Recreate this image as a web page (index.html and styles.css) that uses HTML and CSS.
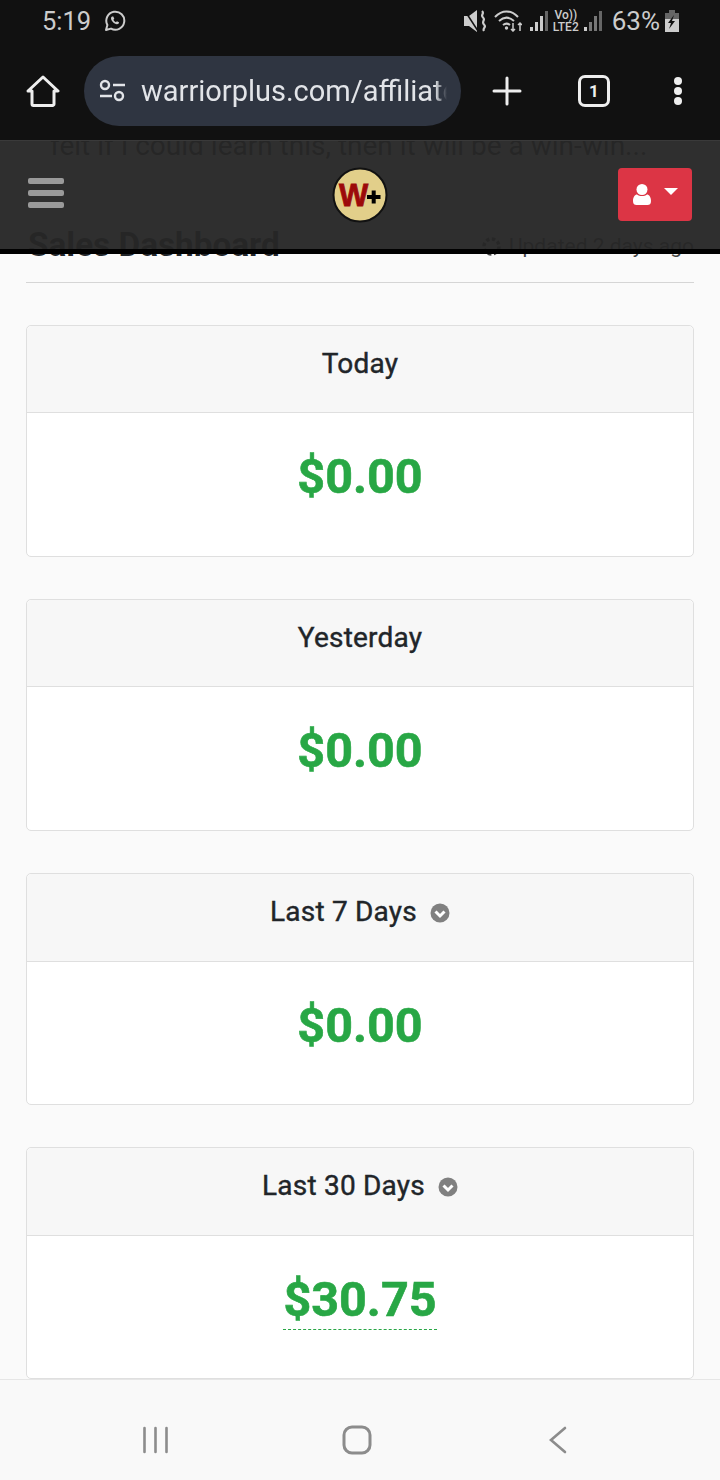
FILE: index.html
```html
<!DOCTYPE html>
<html lang="en">
<head>
<meta charset="utf-8">
<title>Sales Dashboard</title>
<link rel="stylesheet" href="styles.css">
</head>

<body>

<div id="phone">

	<div id="chrome">
		<div class="status-bar">
			<div class="status-left">
				<span class="clock">5:19</span>
				<svg class="wa-icon" width="22" height="22" viewBox="0 0 22 22"><path d="M2 20l1.400-5A9 9 0 1 1 7 18.600z" fill="none" stroke="#ccc" stroke-width="2" stroke-linejoin="round"/><path d="M8 6.500c-1.200.6-1.300 2.300-.3 4 1 1.800 3 3.500 5 3.800 1.300.2 2.400-.8 2.300-2l-2.100-1-1 1c-1-.4-2-1.400-2.500-2.500l.9-1-1-2.300z" fill="#ccc"/></svg>
			</div>
			<div class="status-right">
				<svg class="st-mute" width="22" height="22" viewBox="0 0 22 22"><path d="M0 6h5l8-6v22l-8-6H0z" fill="#ccc"/><path d="M1 1l13 20" stroke="#111" stroke-width="1.500"/><path d="M18 1c3 2.500-2 4 1 6.500s-2 4 1 7-2 3.500 0 6.500" fill="none" stroke="#ccc" stroke-width="2.200"/></svg>
				<svg class="st-wifi" width="28" height="22" viewBox="0 0 28 22"><g fill="none" stroke="#ccc" stroke-width="2"><path d="M1 7c7-7.500 16-7.500 23 0"/><path d="M5 11c5-4.500 10-4.500 15 0"/><path d="M9 15c2.500-2 4.500-2 7 0"/></g><circle cx="12.500" cy="18" r="1.700" fill="#ccc"/><path d="M19 13v8M17 19l2 2 2-2M26 21v-8M24 15l2-2 2 2" fill="none" stroke="#ccc" stroke-width="1.500"/></svg>
				<div class="signal">
					<i class="b1"></i><i class="b2"></i><i class="b3"></i><i class="b4"></i>
				</div>
				<div class="volte"><span>Vo))</span><span>LTE2</span></div>
				<div class="signal dim">
					<i class="b1"></i><i class="b2"></i><i class="b3"></i><i class="b4"></i>
				</div>
				<span class="battery-pct">63%</span>
				<svg width="14" height="22" viewBox="0 0 14 22"><path d="M4 0h6v3h4v19H0V3h4z" fill="#666"/><path d="M0 9h14v13H0z" fill="#ccc"/><path d="M9 5L3 13h3l-2 6 6-8H7z" fill="#111"/></svg>
			</div>
		</div>
		<div class="toolbar">
			<svg class="tool-home" width="34" height="34" viewBox="0 0 34 34"><path d="M2 17L17 3l15 14h-4v13a1.500 1.500 0 0 1-1.500 1.500h-19A1.500 1.500 0 0 1 6 30V17z" fill="none" stroke="#eee" stroke-width="3" stroke-linejoin="round"/></svg>
			<div class="url-pill">
				<svg class="url-tune" width="28" height="24" viewBox="0 0 28 24"><g fill="none" stroke="#e2e4e8" stroke-width="2.400"><circle cx="6" cy="6" r="4"/><circle cx="20" cy="17" r="4"/><path d="M14 6h12M1 17h12"/></g></svg>
				<span class="url-text">warriorplus.com/affiliate</span>
			</div>
			<svg class="tool-plus" width="30" height="30" viewBox="0 0 30 30"><path d="M15 2v26M2 15h26" stroke="#eee" stroke-width="3" stroke-linecap="round"/></svg>
			<div class="tab-count">1</div>
			<div class="tool-menu"><i></i><i></i><i></i></div>
		</div>
	</div>

	<div id="page">
		<nav class="navbar">
			<div class="burger"><i></i><i></i><i></i></div>
			<svg class="logo" width="56" height="56" viewBox="0 0 56 56"><circle cx="28" cy="28" r="26.500" fill="#e2cf8a" stroke="#111" stroke-width="2"/><text x="7" y="39" class="logo-w">W</text><path d="M35 30h13.500M41.700 23.500v13" stroke="#000" stroke-width="4"/></svg>
			<div class="user-btn">
				<svg width="18" height="22" viewBox="0 0 18 22"><circle cx="9" cy="5.500" r="5.500" fill="#fff"/><path d="M0 17c0-4 2-6.500 4-6.500 1.500 1 3 1.500 5 1.500s3.500-.5 5-1.500c2 0 4 2.500 4 6.500 0 3-1.500 4-3.500 4h-11C1.500 21 0 20 0 17z" fill="#fff"/></svg>
				<span class="caret"></span>
			</div>
		</nav>

		<p class="ghost-line">felt if I could learn this, then it will be a win-win...</p>

		<div class="page-head">
			<h1>Sales Dashboard</h1>
			<div class="updated">
				<svg width="19" height="19" viewBox="0 0 19 19"><circle cx="9.500" cy="9.500" r="7.500" fill="none" stroke="#444" stroke-width="3.500" stroke-dasharray="3.500 2.400"/></svg>
				<span>Updated 2 days ago</span>
			</div>
		</div>

		<div class="card">
			<div class="card-header">Today</div>
			<div class="card-body"><span class="amount">$0.00</span></div>
		</div>
		<div class="card">
			<div class="card-header">Yesterday</div>
			<div class="card-body"><span class="amount">$0.00</span></div>
		</div>
		<div class="card card-tall">
			<div class="card-header">Last 7 Days
				<svg class="chev" width="20" height="20" viewBox="0 0 20 20"><circle cx="10" cy="10" r="9.500" fill="#808080"/><path d="M5.500 8.500L10 13l4.500-4.500" fill="none" stroke="#fff" stroke-width="3"/></svg>
			</div>
			<div class="card-body"><span class="amount">$0.00</span></div>
		</div>
		<div class="card card-tall">
			<div class="card-header">Last 30 Days
				<svg class="chev" width="20" height="20" viewBox="0 0 20 20"><circle cx="10" cy="10" r="9.500" fill="#808080"/><path d="M5.500 8.500L10 13l4.500-4.500" fill="none" stroke="#fff" stroke-width="3"/></svg>
			</div>
			<div class="card-body"><span class="amount dotted">$30.75</span></div>
		</div>
	</div>

	<div id="softkeys">
		<svg width="28" height="28" viewBox="0 0 28 28"><path d="M3.500 2v24M14.500 2v24M25.500 2v24" stroke="#8c8c8c" stroke-width="2.600" stroke-linecap="round"/></svg>
		<svg class="key-home" width="30" height="30" viewBox="0 0 30 30"><rect x="2" y="2" width="26" height="26" rx="8" fill="none" stroke="#8c8c8c" stroke-width="3"/></svg>
		<svg width="20" height="28" viewBox="0 0 20 28"><path d="M17 2L3 14l14 12" fill="none" stroke="#8c8c8c" stroke-width="2.600" stroke-linecap="round"/></svg>
	</div>

</div>

</body>
</html>
```

FILE: styles.css
```css
html {
	font-family: Roboto, sans-serif;
}

body {
	margin: 0;
}

svg {
	display: block;
}

#phone {
	display: flex;
	flex-direction: column;
	height: 1480px;
	overflow: hidden;
	width: 720px;
}

/* phone status bar and browser toolbar */

#chrome {
	background-color: #111;
	flex: 0 0 140px;
}

.status-bar {
	align-items: center;
	display: flex;
	height: 42px;
	justify-content: space-between;
	padding: 0 41px 0 42px;
}

.status-left, .status-right {
	align-items: center;
	display: flex;
}

.status-left {
	gap: 13px;
}

.clock {
	color: #ccc;
	font-size: 25.500px;
}

.st-wifi {
	margin: 0 8px;
}

.signal {
	align-items: flex-end;
	display: flex;
	gap: 2px;
	height: 20px;
}

.signal i {
	background-color: #ccc;
	display: block;
	width: 3px;
}

.signal.dim i {
	background-color: #777;
}

.signal.dim .b1 {
	background-color: #ccc;
}

.b1 { height: 4px; }
.b2 { height: 9px; }
.b3 { height: 15px; }
.b4 { height: 20px; background-color: #666 !important; }

.volte {
	color: #ccc;
	display: flex;
	flex-direction: column;
	font-size: 12px;
	font-weight: 500;
	line-height: 12px;
	margin: 0 5px;
	text-align: center;
}

.battery-pct {
	color: #ccc;
	font-size: 26px;
	margin: 0 5px 0 10px;
}

.toolbar {
	align-items: center;
	display: flex;
	height: 70px;
	margin-top: 14px;
	padding: 0 26px;
}

.url-pill {
	align-items: center;
	background-color: #2f3541;
	border-radius: 35px;
	box-sizing: border-box;
	display: flex;
	flex: 0 0 377px;
	gap: 14px;
	height: 70px;
	margin-left: 24px;
	min-width: 0;
	padding: 0 14px 0 15px;
}

.url-tune {
	flex: none;
}

.url-text {
	color: #e2e4e8;
	font-size: 29px;
	min-width: 0;
	overflow: hidden;
	white-space: nowrap;
	-webkit-mask-image: linear-gradient(to right, #000 96%, transparent);
}

.tool-plus {
	margin-left: 31px;
}

.tab-count {
	border: 3px solid #eee;
	border-radius: 7px;
	color: #eee;
	font-size: 17px;
	font-weight: 700;
	height: 26px;
	line-height: 26px;
	margin-left: 56px;
	text-align: center;
	width: 26px;
}

.tool-menu {
	display: flex;
	flex-direction: column;
	gap: 2px;
	margin-left: 64px;
}

.tool-menu i {
	background-color: #eee;
	border-radius: 50%;
	display: block;
	height: 8px;
	width: 8px;
}

/* web page */

#page {
	background-color: #fafafa;
	flex: 1;
	overflow: hidden;
	position: relative;
}

.navbar {
	align-items: center;
	background-color: rgba(38, 38, 38, 0.96);
	border-bottom: 5px solid #000;
	box-shadow: inset 0 1px 0 #3a3a3a;
	display: flex;
	height: 109px;
	justify-content: space-between;
	left: 0;
	padding: 0 28px;
	position: absolute;
	right: 0;
	top: 0;
	z-index: 2;
}

.burger {
	display: flex;
	flex-direction: column;
	gap: 6px;
	margin: 0 38px 3px 0;
}

.burger i {
	background-color: #9a9a9a;
	border-radius: 2px;
	display: block;
	height: 6px;
	width: 36px;
}

.logo-w {
	fill: #9c0a0a;
	font-family: "Liberation Sans", sans-serif;
	font-size: 31px;
	font-weight: 700;
	stroke: #9c0a0a;
	stroke-width: 0.800px;
}

.user-btn {
	align-items: center;
	background-color: #dc3545;
	border-radius: 4px;
	display: flex;
	gap: 13px;
	height: 53px;
	justify-content: center;
	width: 74px;
}

.caret {
	border-left: 7px solid transparent;
	border-right: 7px solid transparent;
	border-top: 7px solid #fff;
	margin-bottom: 6px;
}

.ghost-line {
	color: #212529;
	font-size: 28px;
	line-height: 32px;
	margin: -10px 0 0 50px;
	white-space: nowrap;
}

.page-head {
	align-items: flex-end;
	border-bottom: 1px solid #d5d5d5;
	box-sizing: border-box;
	display: flex;
	height: 60px;
	justify-content: space-between;
	margin: 61px 26px 42px;
	padding-bottom: 22px;
}

.page-head h1 {
	color: #212529;
	font-size: 33.300px;
	font-weight: 700;
	line-height: 38px;
	margin: 0 0 -4px 2px;
}

.updated {
	align-items: center;
	color: #444;
	display: flex;
	font-size: 21px;
	gap: 8px;
	margin-bottom: 2px;
}

.card {
	background-color: #fff;
	border: 1px solid #dfdfdf;
	border-radius: 5px;
	box-sizing: border-box;
	height: 232px;
	margin: 0 26px 42px;
}

.card-header {
	align-items: center;
	background-color: #f7f7f7;
	border-bottom: 1px solid #dfdfdf;
	border-radius: 5px 5px 0 0;
	box-sizing: border-box;
	color: #212529;
	display: flex;
	font-size: 28px;
	font-weight: 400;
	gap: 13px;
	height: 87px;
	justify-content: center;
	letter-spacing: 0.200px;
	padding-bottom: 12px;
	-webkit-text-stroke: 0.400px #212529;
}

.card-tall .card-header {
	height: 88px;
	padding-bottom: 13px;
}

.chev {
	margin-top: 4px;
}

.card-body {
	padding-top: 35px;
	text-align: center;
}

.amount {
	color: #28a745;
	display: inline-block;
	font-size: 48.500px;
	font-weight: 700;
	line-height: 58px;
	-webkit-text-stroke: 0.600px #28a745;
}

.dotted {
	border-bottom: 1px dashed #28a745;
}

#softkeys {
	align-items: center;
	background-color: #f9f9f9;
	border-top: 1px solid #e6e6e6;
	box-sizing: border-box;
	display: flex;
	flex: 0 0 101px;
	justify-content: space-between;
	padding: 20px 152px 0 141px;
}

.key-home {
	margin-right: 3px;
}
```
